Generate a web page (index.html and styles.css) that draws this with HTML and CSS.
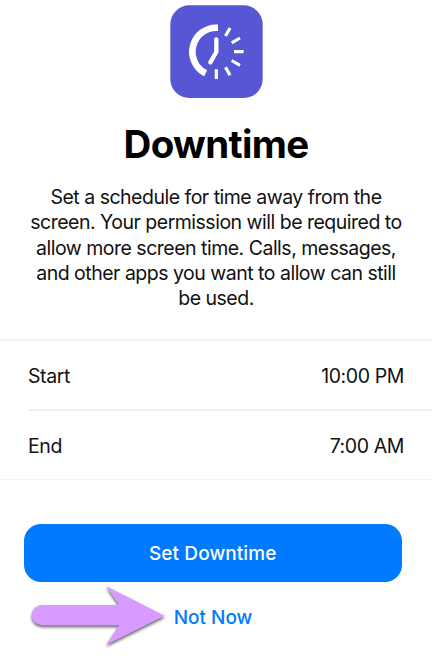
FILE: index.html
```html
<!DOCTYPE html>
<html lang="en">
<head>
<meta charset="utf-8">
<title>Downtime</title>
<link rel="stylesheet" href="styles.css">
</head>
<body>
<main class="screen">
  <svg class="app-icon" viewBox="30 14 279 279" aria-hidden="true">
    <rect x="31" y="15" width="277" height="278" rx="57" fill="#5756d5"/>
    <g fill="none" stroke="#fff">
      <path d="M174 82.200H169A72 72 0 0 0 133 216.500L137 218.500" stroke-width="20"/>
      <path d="M169 117V155L151 186" stroke-width="13" stroke-linecap="round" stroke-linejoin="round"/>
      <path d="M196.500 107L210 83M215 127.500L240 113M222 154H251M215 180.500L240 195M196.500 201L210 225M169 207V236" stroke-width="9.500"/>
    </g>
  </svg>
  <h1 class="title">Downtime</h1>
  <p class="intro">
    <span class="line">Set a schedule for time away from the</span>
    <span class="line">screen. Your permission will be required to</span>
    <span class="line">allow more screen time. Calls, messages,</span>
    <span class="line">and other apps you want to allow can still</span>
    <span class="line">be used.</span>
  </p>
  <section class="schedule">
    <div class="row"><span class="label">Start</span><span class="time">10:00 PM</span></div>
    <div class="row"><span class="label">End</span><span class="time">7:00 AM</span></div>
  </section>
  <button class="primary" type="button">Set Downtime</button>
  <div class="secondary">
    <button class="link" type="button">Not Now</button>
    <svg class="arrow" viewBox="84 216 432 216" aria-hidden="true">
      <path d="M125.500 285H357L318 228L494 317L318 405L357 346H125.500A30.500 30.500 0 0 1 125.500 285Z" fill="#d99bff"/>
    </svg>
  </div>
</main>
</body>
</html>
```

FILE: styles.css
```css
* { box-sizing: border-box; }
body {
  margin: 0;
  background: #fff;
  color: #000;
  font-family: Inter, "Liberation Sans", sans-serif;
}
.screen {
  display: flex;
  flex-direction: column;
  width: 432px;
  height: 661px;
  padding-top: 5px;
  overflow: hidden;
}
.app-icon {
  width: 93px;
  height: 93px;
  margin-left: 170px;
  flex: none;
}
.title {
  margin: 23px 0 0;
  font-size: 38.5px;
  line-height: 46px;
  font-weight: 700;
  text-align: center;
  letter-spacing: -0.65px;
}
.intro {
  margin: 18px 0 0;
  font-size: 19.5px;
  line-height: 25.300px;
  text-align: center;
  letter-spacing: -0.5px;
  color: #111;
}
.line { display: block; white-space: nowrap; }
.schedule {
  margin-top: 27.5px;
  border-top: 2px solid #f1f1f2;
  border-bottom: 1px solid #f4f4f5;
}
.row {
  display: flex;
  justify-content: space-between;
  align-items: center;
  height: 68px;
  margin-left: 28px;
  padding: 3px 28px 0 0;
  font-size: 19.5px;
  letter-spacing: -0.4px;
  color: #111;
}
.row + .row {
  height: 70px;
  border-top: 2px solid #f1f1f2;
}
button {
  border: 0;
  padding: 0;
  font: 500 19px/24px Inter, "Liberation Sans", sans-serif;
}
.primary {
  flex: none;
  width: 377.500px;
  height: 58px;
  margin: 44px 0 0 24px;
  padding-top: 2px;
  border-radius: 17px;
  background: #007aff;
  color: #fff;
  letter-spacing: 0.1px;
}
.secondary {
  position: relative;
  height: 79px;
  padding-top: 24px;
  text-align: center;
}
.link {
  background: none;
  color: #007aff;
  margin-right: 6px;
}
.arrow {
  position: absolute;
  left: 28px;
  top: 0;
  width: 144px;
  height: 72px;
  filter: drop-shadow(0 2px 1.500px rgba(0, 0, 0, 0.6));
}
```
